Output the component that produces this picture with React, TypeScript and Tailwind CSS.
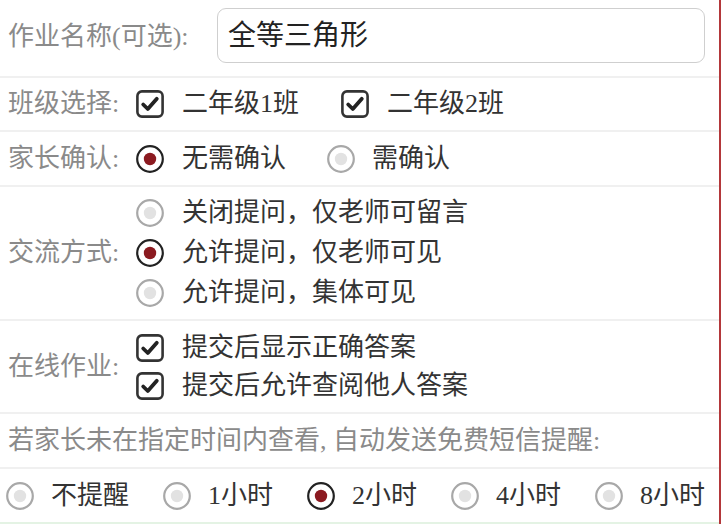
import { useState } from 'react';

// Checkbox drawn like the native mobile control in the reference
const CheckBox = () => (
  <svg width="28" height="28" viewBox="0 0 28 28" className="shrink-0">
    <rect x="1.4" y="1.4" width="25.2" height="25.2" rx="4.5" fill="#fff" stroke="#333" strokeWidth="2.6" />
    <path d="M7.2 14.5 L11.8 19 L20.8 8.8" fill="none" stroke="#222" strokeWidth="3.8" strokeLinecap="round" strokeLinejoin="round" />
  </svg>
);

const Radio = ({ on }: { on: boolean }) => (
  <svg width="28" height="28" viewBox="0 0 28 28" className="shrink-0">
    <circle cx="14" cy="14" r="12.8" fill="#fff" stroke={on ? '#222' : '#a8a8a8'} strokeWidth="2.2" />
    <circle cx="14" cy="14" r="6.2" fill={on ? '#8b1a20' : '#e2e2e2'} />
  </svg>
);

const Label = ({ text }: { text: string }) => (
  <div className="w-[136px] shrink-0 pl-2 text-[#8a8a8a]">{text}</div>
);

const reminders = ['不提醒', '1小时', '2小时', '4小时', '8小时'];

const App = () => {
  const [remind] = useState(2);

  return (
    <div
      className="flex w-[721px] h-[524px] bg-white text-[26px] leading-none"
      style={{ fontFamily: '"Liberation Serif", "Noto Sans CJK SC", serif' }}
    >
      <div className="flex-1 flex flex-col">
        {/* homework name */}
        <div className="h-[78px] flex items-start pt-2 border-b-2 border-[#f0f0f0]">
          <div className="pl-2 pt-[16px] w-[217px] text-[#8a8a8a]">作业名称(可选):</div>
          <div className="w-[488px] h-[55px] border border-[#cfcfcf] rounded-[9px] flex items-center pl-[10px] text-[28px] text-[#222]">
            全等三角形
          </div>
        </div>

        {/* classes */}
        <div className="h-[54px] flex items-center border-b-2 border-[#f0f0f0]">
          <Label text="班级选择:" />
          <div className="flex items-center gap-[18px] text-[#333]">
            <CheckBox />
            <span>二年级1班</span>
          </div>
          <div className="flex items-center gap-[18px] text-[#333] ml-[42px]">
            <CheckBox />
            <span>二年级2班</span>
          </div>
        </div>

        {/* parent confirmation */}
        <div className="h-[55px] flex items-center border-b-2 border-[#f0f0f0]">
          <Label text="家长确认:" />
          <div className="flex items-center gap-[18px] text-[#333]">
            <Radio on />
            <span>无需确认</span>
          </div>
          <div className="flex items-center gap-[17px] text-[#333] ml-[41px]">
            <Radio on={false} />
            <span>需确认</span>
          </div>
        </div>

        {/* communication mode */}
        <div className="h-[134px] flex items-center border-b-2 border-[#f0f0f0]">
          <Label text="交流方式:" />
          <div className="flex flex-col text-[#333]">
            {['关闭提问，仅老师可留言', '允许提问，仅老师可见', '允许提问，集体可见'].map((t, i) => (
              <div key={t} className="h-[40px] flex items-center gap-[18px]">
                <Radio on={i === 1} />
                <span>{t}</span>
              </div>
            ))}
          </div>
        </div>

        {/* online homework */}
        <div className="h-[93px] flex items-center border-b-2 border-[#f0f0f0]">
          <Label text="在线作业:" />
          <div className="flex flex-col text-[#333]">
            {['提交后显示正确答案', '提交后允许查阅他人答案'].map((t) => (
              <div key={t} className="h-[38px] flex items-center gap-[18px]">
                <CheckBox />
                <span>{t}</span>
              </div>
            ))}
          </div>
        </div>

        <div className="h-[55px] flex items-center pl-2 text-[#8a8a8a] border-b-2 border-[#f0f0f0]">
          若家长未在指定时间内查看, 自动发送免费短信提醒:
        </div>

        {/* reminder options */}
        <div className="h-[53px] flex items-center justify-between pl-[6px] pr-[14px] text-[#333]">
          {reminders.map((r, i) => (
            <div key={r} className="flex items-center gap-[17px]">
              <Radio on={i === remind} />
              <span>{r}</span>
            </div>
          ))}
        </div>
        <div className="h-[2px] bg-[#e4f3e4]" />
      </div>
      <div className="w-[2px] bg-[#b3373a]" />
    </div>
  );
};

export default App;
